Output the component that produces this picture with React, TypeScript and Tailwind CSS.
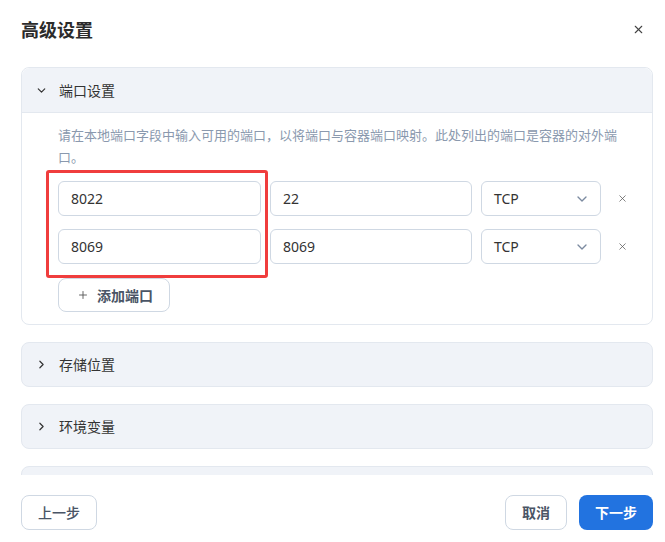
import React from "react";
import { ChevronDown, ChevronRight, X, Plus } from "lucide-react";

const font = "font-['Noto_Sans','Noto_Sans_CJK_SC',sans-serif]";

function PortRow({ a, b }: { a: string; b: string }) {
  return (
    <div className="flex items-center gap-[9px]">
      <div className="shrink-0 w-[203px] h-[35px] rounded-md border border-[#cfd8e3] bg-white flex items-center pl-[12px] text-[14px] text-[#333]">
        {a}
      </div>
      <div className="shrink-0 w-[202px] h-[35px] rounded-md border border-[#cfd8e3] bg-white flex items-center pl-[12px] text-[14px] text-[#333]">
        {b}
      </div>
      <div className="shrink-0 w-[120px] h-[35px] rounded-md border border-[#cfd8e3] bg-white flex items-center justify-between pl-[12px] pr-[10px] text-[14px] text-[#333]">
        <span>TCP</span>
        <ChevronDown size={16} strokeWidth={2} className="text-[#7b8aa0]" />
      </div>
      <div className="shrink-0 w-[24px] flex items-center justify-center">
        <X size={11} strokeWidth={1.6} className="text-[#555]" />
      </div>
    </div>
  );
}

function Collapsed({ title }: { title: string }) {
  return (
    <div className="h-[45px] shrink-0 rounded-lg border border-[#e3e8ef] bg-[#f0f3f8] flex items-center pl-[13px]">
      <ChevronRight size={13} strokeWidth={2.2} className="text-[#333]" />
      <span className="ml-[11px] text-[14px] text-[#333]">{title}</span>
    </div>
  );
}

export default function App() {
  return (
    <div className={`w-[665px] h-[542px] bg-white flex flex-col ${font}`}>
      <div className="flex items-center justify-between pl-[21px] pr-[20px] pt-[17px] h-[42px] shrink-0">
        <h1 className="text-[18px] leading-[26px] font-bold text-[#2b2b2b]">高级设置</h1>
        <X size={13} strokeWidth={2} className="text-[#444]" />
      </div>
      <div className="mt-[25px] h-[408px] overflow-hidden pl-[21px] pr-[12px] flex flex-col gap-[17px]">
        <div className="shrink-0 rounded-lg border border-[#e3e8ef] bg-white">
          <div className="h-[45px] rounded-t-lg bg-[#f0f3f8] border-b border-[#e3e8ef] flex items-center pl-[13px]">
            <ChevronDown size={13} strokeWidth={2.2} className="text-[#333]" />
            <span className="ml-[11px] text-[14px] text-[#333]">端口设置</span>
          </div>
          <div className="pl-[36px] pr-[24px] pt-[11px] pb-[12px]">
            <p className="text-[13px] leading-[22px] text-[#8a99ae]">
              请在本地端口字段中输入可用的端口，以将端口与容器端口映射。此处列出的端口是容器的对外端口。
            </p>
            <div className="relative mt-[13px] flex flex-col gap-[13px]">
              <div className="absolute left-[-12px] top-[-11px] w-[222px] h-[108px] border-[3px] border-[#f03d3d] rounded-[3px] pointer-events-none" />
              <PortRow a="8022" b="22" />
              <PortRow a="8069" b="8069" />
            </div>
            <button className="mt-[14px] h-[34px] w-[112px] rounded-lg border border-[#cfd8e3] bg-white flex items-center pl-[18px] text-[14px] font-bold text-[#4a5566]">
              <Plus size={12} strokeWidth={1.8} className="text-[#555]" />
              <span className="ml-[8px]">添加端口</span>
            </button>
          </div>
        </div>
        <Collapsed title="存储位置" />
        <Collapsed title="环境变量" />
        <div className="h-[45px] shrink-0 rounded-lg border border-[#e3e8ef] bg-[#f0f3f8]" />
      </div>
      <div className="flex items-center justify-between pl-[21px] pr-[12px] pt-[20px]">
        <button className="h-[35px] w-[76px] rounded-lg border border-[#cfd8e3] bg-white text-[14px] text-[#4a5566] font-medium">
          上一步
        </button>
        <div className="flex items-center gap-[12px]">
          <button className="h-[35px] w-[62px] rounded-lg border border-[#cfd8e3] bg-white text-[14px] text-[#4a5566] font-bold">
            取消
          </button>
          <button className="h-[35px] w-[74px] rounded-lg bg-[#2273e0] text-[14px] text-white font-bold">
            下一步
          </button>
        </div>
      </div>
    </div>
  );
}
